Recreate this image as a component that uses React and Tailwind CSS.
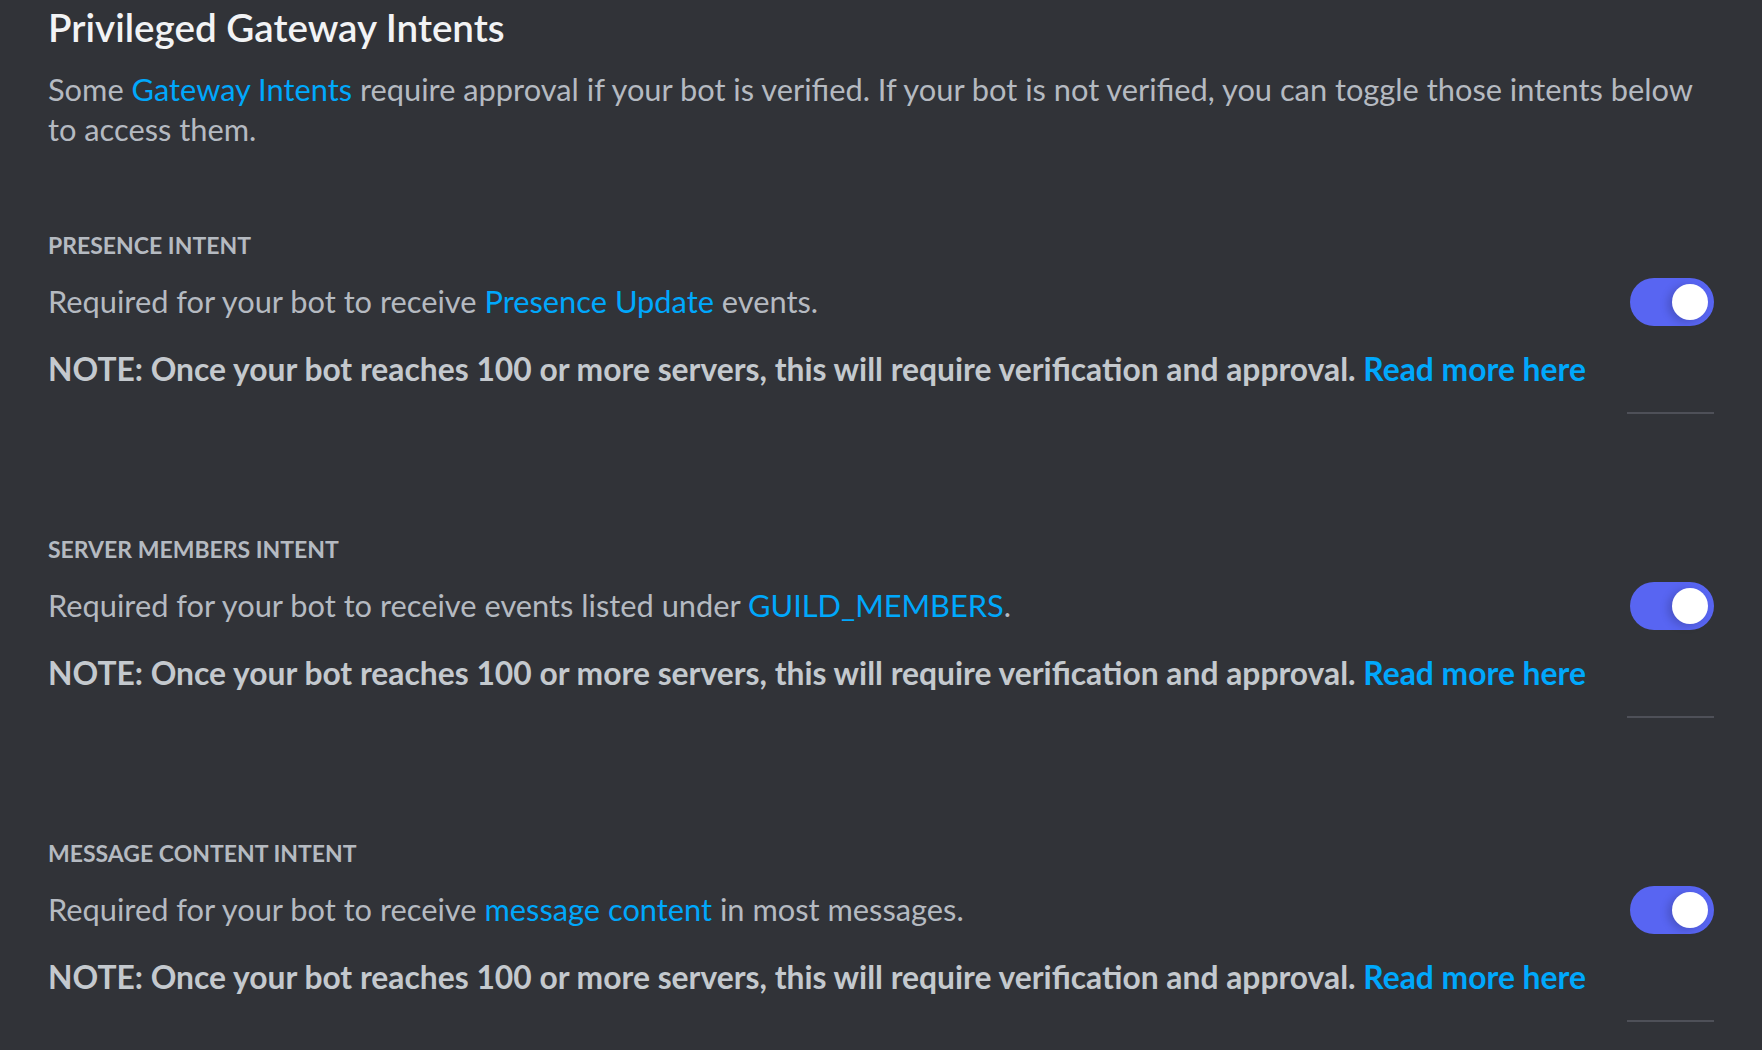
import React from "react";

const font = { fontFamily: "Lato, 'Noto Sans', sans-serif" };

function Toggle() {
  return (
    <div className="relative w-[84px] h-[48px] rounded-full bg-[#5865f2] shrink-0">
      <div className="absolute right-[6px] top-[6px] w-[36px] h-[36px] rounded-full bg-white shadow-[-4px_2px_8px_rgba(0,0,0,0.18)]" />
    </div>
  );
}

function Link({ children }) {
  return <span className="text-[#00a8fc]">{children}</span>;
}

function Intent({ label, desc, first }) {
  return (
    <div className={first ? "mt-[79px] flex flex-col" : "mt-[119px] flex flex-col"}>
      <div className="text-[23px] leading-[32px] font-bold uppercase text-[#b5bac1]">{label}</div>
      <div className="mt-[17px] h-[48px] flex items-center justify-between">
        <div className="text-[30.8px] leading-[40px] text-[#b5bac1] whitespace-nowrap">{desc}</div>
        <Toggle />
      </div>
      <div className="mt-[23px] text-[31.8px] leading-[40px] font-bold text-[#c4c9ce] whitespace-nowrap">
        NOTE: Once your bot reaches 100 or more servers, this will require verification and approval.{" "}
        <Link>Read more here</Link>
      </div>
      <div className="mt-[23px] self-end w-[87px] h-[2px] bg-[#4e5058]" />
    </div>
  );
}

export default function App() {
  return (
    <div className="bg-[#313338] min-h-screen w-full pl-[48px] pr-[48px] pt-[3px] pb-[28px]" style={font}>
      <div className="text-[38.6px] leading-[48px] font-semibold text-[#f2f3f5]">Privileged Gateway Intents</div>
      <div className="mt-[19px] text-[30.8px] leading-[40px] text-[#b5bac1] max-w-[1666px]">
        Some <Link>Gateway Intents</Link> require approval if your bot is verified. If your bot is not verified, you can toggle those intents below to access them.
      </div>
      <Intent
        first
        label="Presence Intent"
        desc={
          <>
            Required for your bot to receive <Link>Presence Update</Link> events.
          </>
        }
      />
      <Intent
        label="Server Members Intent"
        desc={
          <>
            Required for your bot to receive events listed under <Link>GUILD_MEMBERS</Link>.
          </>
        }
      />
      <Intent
        label="Message Content Intent"
        desc={
          <>
            Required for your bot to receive <Link>message content</Link> in most messages.
          </>
        }
      />
    </div>
  );
}
